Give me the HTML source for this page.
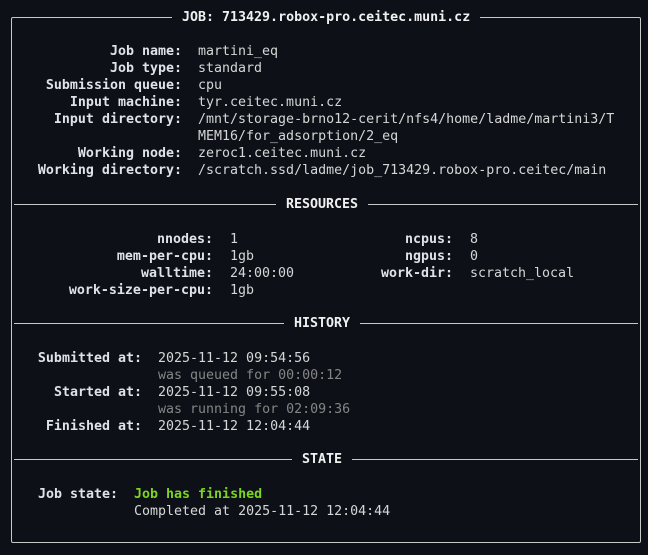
<!DOCTYPE html>
<html><head><meta charset="utf-8"><style>
html,body{margin:0;padding:0;background:#0d1117;width:648px;height:555px;overflow:hidden}
body{position:relative;font-family:"DejaVu Sans Mono","Liberation Mono",monospace;font-size:13.3px;color:#d6d6d6}
.box{position:absolute;left:11px;top:17px;width:630px;height:526px;border:1px solid #c9c9c9;border-radius:2px;box-sizing:border-box}
.w{position:absolute;left:0;top:1px;width:648px;height:555px}
.t{position:absolute;white-space:pre;line-height:17px;height:17px}
.l{font-weight:bold;color:#dfe3e8;text-align:right}
.g{color:#858585}
.gr{color:#7ed321;font-weight:bold}
.h{position:absolute;height:1px;background:#c9c9c9}
.st{position:absolute;white-space:pre;line-height:17px;font-weight:bold;color:#f0f0f0;background:#0d1117;padding:0 10px}
</style></head><body>
<div class="box"></div>
<div class="st" style="left:172px;top:9px">JOB: 713429.robox-pro.ceitec.muni.cz</div>
<div class="w">
<div class="t l" style="right:466px;top:42px">Job name:</div><div class="t" style="left:198px;top:42px">martini_eq</div>
<div class="t l" style="right:466px;top:59px">Job type:</div><div class="t" style="left:198px;top:59px">standard</div>
<div class="t l" style="right:466px;top:76px">Submission queue:</div><div class="t" style="left:198px;top:76px">cpu</div>
<div class="t l" style="right:466px;top:93px">Input machine:</div><div class="t" style="left:198px;top:93px">tyr.ceitec.muni.cz</div>
<div class="t l" style="right:466px;top:110px">Input directory:</div><div class="t" style="left:198px;top:110px">/mnt/storage-brno12-cerit/nfs4/home/ladme/martini3/T</div>
<div class="t" style="left:198px;top:127px">MEM16/for_adsorption/2_eq</div>
<div class="t l" style="right:466px;top:144px">Working node:</div><div class="t" style="left:198px;top:144px">zeroc1.ceitec.muni.cz</div>
<div class="t l" style="right:466px;top:161px">Working directory:</div><div class="t" style="left:198px;top:161px">/scratch.ssd/ladme/job_713429.robox-pro.ceitec/main</div>

<div class="h" style="left:14px;width:624px;top:203px"></div>
<div class="st" style="left:276px;top:195px">RESOURCES</div>
<div class="t l" style="right:435px;top:230px">nnodes:</div><div class="t" style="left:230px;top:230px">1</div>
<div class="t l" style="right:435px;top:247px">mem-per-cpu:</div><div class="t" style="left:230px;top:247px">1gb</div>
<div class="t l" style="right:435px;top:264px">walltime:</div><div class="t" style="left:230px;top:264px">24:00:00</div>
<div class="t l" style="right:435px;top:281px">work-size-per-cpu:</div><div class="t" style="left:230px;top:281px">1gb</div>
<div class="t l" style="right:195px;top:230px">ncpus:</div><div class="t" style="left:470px;top:230px">8</div>
<div class="t l" style="right:195px;top:247px">ngpus:</div><div class="t" style="left:470px;top:247px">0</div>
<div class="t l" style="right:195px;top:264px">work-dir:</div><div class="t" style="left:470px;top:264px">scratch_local</div>

<div class="h" style="left:14px;width:624px;top:322px"></div>
<div class="st" style="left:284px;top:314px">HISTORY</div>
<div class="t l" style="right:506px;top:349px">Submitted at:</div><div class="t" style="left:158px;top:349px">2025-11-12 09:54:56</div>
<div class="t g" style="left:158px;top:366px">was queued for 00:00:12</div>
<div class="t l" style="right:506px;top:383px">Started at:</div><div class="t" style="left:158px;top:383px">2025-11-12 09:55:08</div>
<div class="t g" style="left:158px;top:400px">was running for 02:09:36</div>
<div class="t l" style="right:506px;top:417px">Finished at:</div><div class="t" style="left:158px;top:417px">2025-11-12 12:04:44</div>

<div class="h" style="left:14px;width:624px;top:458px"></div>
<div class="st" style="left:292px;top:450px">STATE</div>
<div class="t l" style="left:38px;top:485px">Job state:</div><div class="t gr" style="left:134px;top:485px">Job has finished</div>
<div class="t" style="left:134px;top:502px">Completed at 2025-11-12 12:04:44</div>
</div>
</body></html>
